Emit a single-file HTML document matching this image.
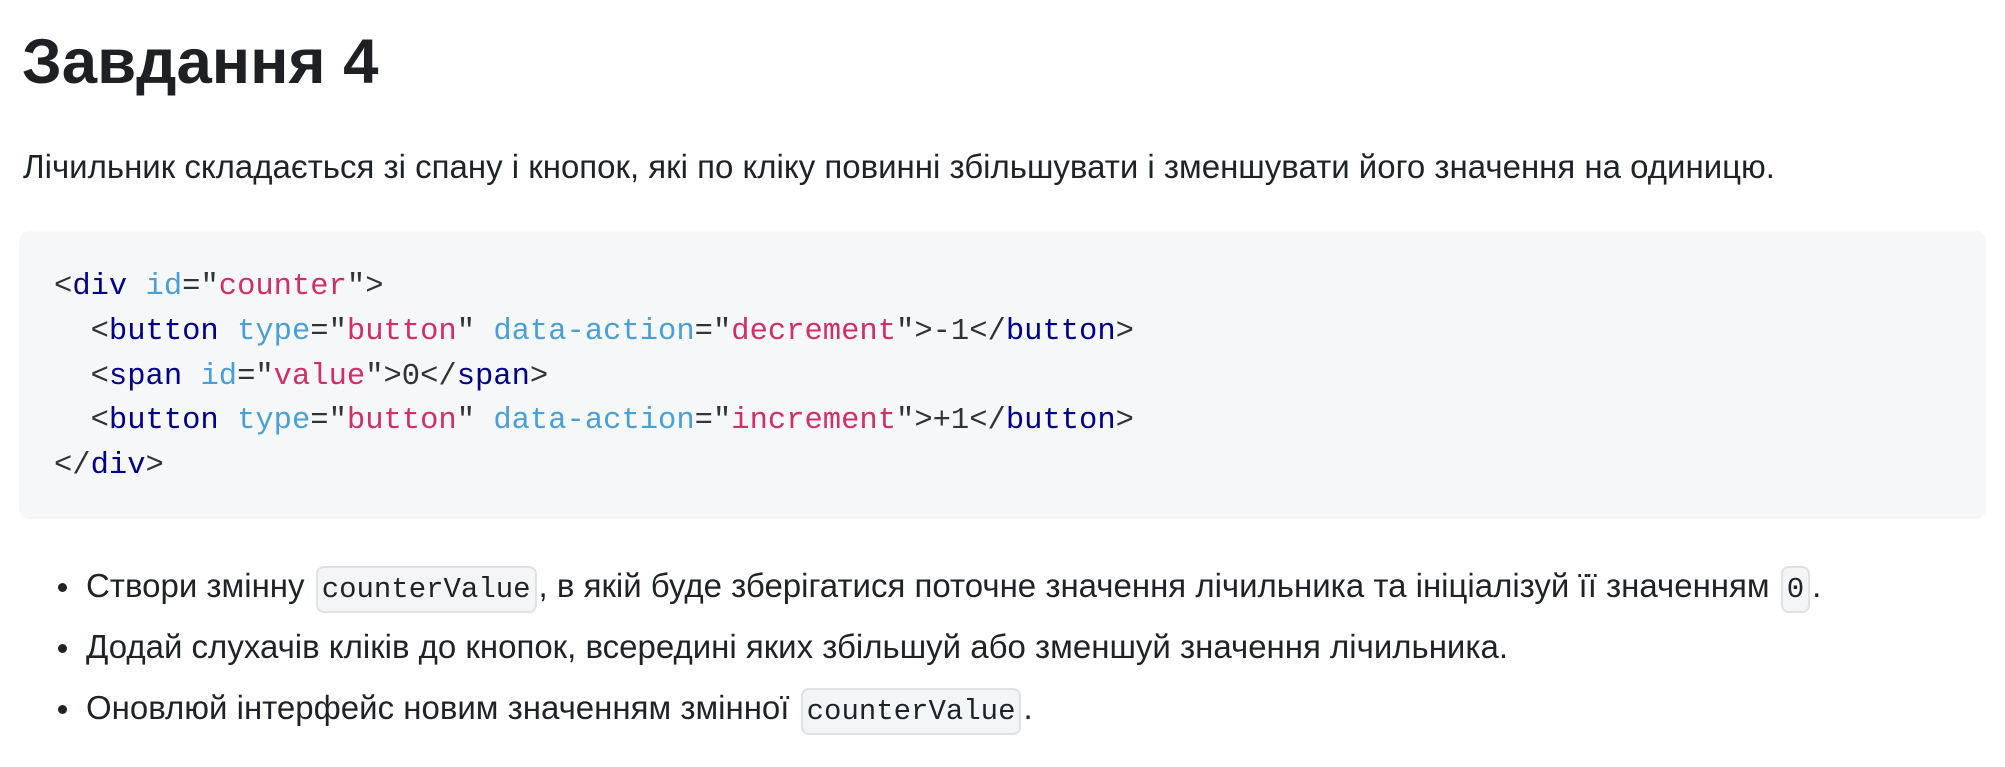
<!DOCTYPE html>
<html><head><meta charset="utf-8"><style>
body{margin:0;background:#fff;width:2005px;height:767px;overflow:hidden;font-family:"Liberation Sans",sans-serif;color:#1f2328}
h1{position:absolute;left:22px;top:22px;margin:0;font-size:63.5px;font-weight:bold;line-height:80px;color:#1f2023}
p{position:absolute;left:23px;top:147px;margin:0;font-size:33px;line-height:40px;white-space:nowrap}
.code{position:absolute;left:20px;top:231px;width:1965px;height:286px;background:#f6f7f9;border-radius:9px;box-shadow:0 1px 2px rgba(0,0,0,.08)}
pre{position:absolute;left:54px;top:265px;margin:0;font-family:"Liberation Mono","DejaVu Sans Mono",monospace;font-size:30.5px;line-height:44.8px;color:#333}
.t{color:#000088}.a{color:#4a9fd6}.s{color:#d12f66}
ul{position:absolute;left:0;top:563px;margin:0;padding:0;list-style:none;font-size:33px}
li{position:relative;padding-left:86px;height:61px;line-height:46px;white-space:nowrap}
li:before{content:"";position:absolute;left:58px;top:20px;width:9px;height:9px;border-radius:50%;background:#1f2328}
code{font-family:"Liberation Mono","DejaVu Sans Mono",monospace;font-size:29px;background:#f4f5f7;border:2px solid #dfe1e4;border-radius:8px;padding:5px 4px;margin:0 2px}
</style></head><body>
<h1>Завдання 4</h1>
<p>Лічильник складається зі спану і кнопок, які по кліку повинні збільшувати і зменшувати його значення на одиницю.</p>
<div class="code"></div>
<pre>&lt;<span class="t">div</span> <span class="a">id</span>="<span class="s">counter</span>"&gt;
  &lt;<span class="t">button</span> <span class="a">type</span>="<span class="s">button</span>" <span class="a">data-action</span>="<span class="s">decrement</span>"&gt;-1&lt;/<span class="t">button</span>&gt;
  &lt;<span class="t">span</span> <span class="a">id</span>="<span class="s">value</span>"&gt;0&lt;/<span class="t">span</span>&gt;
  &lt;<span class="t">button</span> <span class="a">type</span>="<span class="s">button</span>" <span class="a">data-action</span>="<span class="s">increment</span>"&gt;+1&lt;/<span class="t">button</span>&gt;
&lt;/<span class="t">div</span>&gt;</pre>
<ul>
<li>Створи змінну <code>counterValue</code>, в якій буде зберігатися поточне значення лічильника та ініціалізуй її значенням <code>0</code>.</li>
<li>Додай слухачів кліків до кнопок, всередині яких збільшуй або зменшуй значення лічильника.</li>
<li>Оновлюй інтерфейс новим значенням змінної <code>counterValue</code>.</li>
</ul>
</body></html>
